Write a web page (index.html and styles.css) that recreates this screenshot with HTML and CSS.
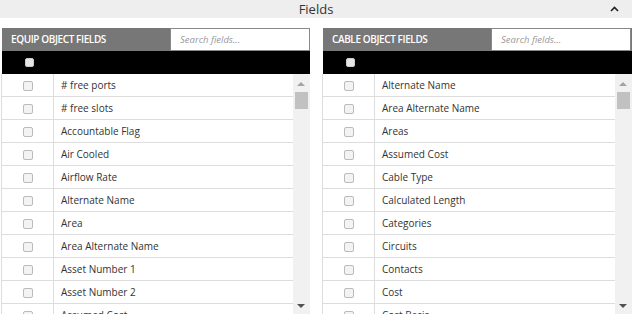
FILE: index.html
```html
<!DOCTYPE html>
<html lang="en">
<head>
    <meta charset="UTF-8">
    <title>Fields</title>
    <link rel="stylesheet" href="styles.css">
</head>
<body>
    <div class="section-header">
        <span class="section-title">Fields</span>
        <svg class="chevron" width="9" height="6" viewBox="0 0 9 6">
            <polyline points="1,5 4.5,1.5 8,5" fill="none" stroke="#222" stroke-width="1.6"/>
        </svg>
    </div>

    <div class="panels">
        <div class="panel panel-left">
            <div class="panel-title">
                <span class="title-text">Equip Object Fields</span>
                <input type="text" class="search" placeholder="Search fields...">
            </div>
            <div class="select-all"><span class="box box-head"></span></div>
            <div class="list">
                <div class="rows">
                    <div class="row"><span class="cell-check"><span class="box"></span></span><span class="cell-name"># free ports</span></div>
                    <div class="row"><span class="cell-check"><span class="box"></span></span><span class="cell-name"># free slots</span></div>
                    <div class="row"><span class="cell-check"><span class="box"></span></span><span class="cell-name">Accountable Flag</span></div>
                    <div class="row"><span class="cell-check"><span class="box"></span></span><span class="cell-name">Air Cooled</span></div>
                    <div class="row"><span class="cell-check"><span class="box"></span></span><span class="cell-name">Airflow Rate</span></div>
                    <div class="row"><span class="cell-check"><span class="box"></span></span><span class="cell-name">Alternate Name</span></div>
                    <div class="row"><span class="cell-check"><span class="box"></span></span><span class="cell-name">Area</span></div>
                    <div class="row"><span class="cell-check"><span class="box"></span></span><span class="cell-name">Area Alternate Name</span></div>
                    <div class="row"><span class="cell-check"><span class="box"></span></span><span class="cell-name">Asset Number 1</span></div>
                    <div class="row"><span class="cell-check"><span class="box"></span></span><span class="cell-name">Asset Number 2</span></div>
                    <div class="row"><span class="cell-check"><span class="box"></span></span><span class="cell-name">Assumed Cost</span></div>
                </div>
                <div class="scrollbar">
                    <span class="arrow-up"></span>
                    <span class="thumb"></span>
                    <span class="arrow-down"></span>
                </div>
            </div>
        </div>

        <div class="panel panel-right">
            <div class="panel-title">
                <span class="title-text">Cable Object Fields</span>
                <input type="text" class="search" placeholder="Search fields...">
            </div>
            <div class="select-all"><span class="box box-head"></span></div>
            <div class="list">
                <div class="rows">
                    <div class="row"><span class="cell-check"><span class="box"></span></span><span class="cell-name">Alternate Name</span></div>
                    <div class="row"><span class="cell-check"><span class="box"></span></span><span class="cell-name">Area Alternate Name</span></div>
                    <div class="row"><span class="cell-check"><span class="box"></span></span><span class="cell-name">Areas</span></div>
                    <div class="row"><span class="cell-check"><span class="box"></span></span><span class="cell-name">Assumed Cost</span></div>
                    <div class="row"><span class="cell-check"><span class="box"></span></span><span class="cell-name">Cable Type</span></div>
                    <div class="row"><span class="cell-check"><span class="box"></span></span><span class="cell-name">Calculated Length</span></div>
                    <div class="row"><span class="cell-check"><span class="box"></span></span><span class="cell-name">Categories</span></div>
                    <div class="row"><span class="cell-check"><span class="box"></span></span><span class="cell-name">Circuits</span></div>
                    <div class="row"><span class="cell-check"><span class="box"></span></span><span class="cell-name">Contacts</span></div>
                    <div class="row"><span class="cell-check"><span class="box"></span></span><span class="cell-name">Cost</span></div>
                    <div class="row"><span class="cell-check"><span class="box"></span></span><span class="cell-name">Cost Basis</span></div>
                </div>
                <div class="scrollbar">
                    <span class="arrow-up"></span>
                    <span class="thumb"></span>
                    <span class="arrow-down"></span>
                </div>
            </div>
        </div>
    </div>
</body>
</html>
```

FILE: styles.css
```css
body {
    margin: 0;
    font-family: "Open Sans", Arial, sans-serif;
    color: #333;
    background: #fff;
    width: 632px;
    overflow: hidden;
}

.section-header {
    height: 18px;
    background-color: #eee;
    display: flex;
    align-items: center;
    justify-content: center;
    position: relative;
}

.section-title {
    font-size: 13px;
    color: #333;
    line-height: 18px;
}

.chevron {
    position: absolute;
    right: 13px;
    top: 6px;
}

.panels {
    display: flex;
    gap: 12px;
    padding-top: 10px;
    padding-left: 1px;
}

.panel {
    display: flex;
    flex-direction: column;
}

.panel-left {
    width: 309px;
}

.panel-right {
    width: 310px;
}

.panel-title {
    display: flex;
    height: 23px;
    margin-left: 1px;
    background-color: #777;
}

.title-text {
    flex: 1;
    color: #fff;
    font-size: 10px;
    font-weight: 600;
    text-transform: uppercase;
    letter-spacing: -0.4px;
    line-height: 23px;
    padding-left: 9px;
}

.search {
    width: 140px;
    box-sizing: border-box;
    height: 23px;
    margin: 0;
    border: 1px solid #888;
    padding: 0 0 0 9px;
    font-family: "Open Sans", Arial, sans-serif;
    font-size: 9.5px;
    outline: none;
}

.search::placeholder {
    color: #999;
    font-style: italic;
}

.panel-right .search {
    margin-right: 1px;
}

.select-all {
    height: 23px;
    margin-left: 1px;
    background-color: #000;
    display: flex;
    align-items: center;
    padding-left: 23px;
}

.box {
    display: inline-block;
    width: 8px;
    height: 8px;
    border: 1px solid #bbb;
    border-radius: 2px;
    background-color: #f3f3f3;
}

.box-head {
    width: 7px;
    height: 7px;
    background-color: #e6e6e6;
    border-color: #ccc;
}

.list {
    display: flex;
    height: 240px;
    border-left: 1px solid #ddd;
}

.rows {
    flex: 1;
    overflow: hidden;
}

.row {
    display: flex;
    height: 22px;
    border-bottom: 1px solid #ddd;
}

.cell-check {
    width: 51px;
    flex: none;
    border-right: 1px solid #ddd;
    display: flex;
    align-items: center;
    justify-content: center;
    padding-top: 1px;
}

.cell-name {
    padding-left: 7px;
    font-size: 10px;
    line-height: 23px;
    color: #333;
    white-space: nowrap;
}

.scrollbar {
    width: 17px;
    flex: none;
    background-color: #f1f1f1;
    position: relative;
}

.arrow-up,
.arrow-down {
    position: absolute;
    left: 4px;
    width: 0;
    height: 0;
    border-left: 4px solid transparent;
    border-right: 4px solid transparent;
}

.arrow-up {
    top: 8px;
    border-bottom: 4px solid #a3a3a3;
}

.arrow-down {
    bottom: 6px;
    border-top: 4px solid #505050;
}

.thumb {
    position: absolute;
    top: 18px;
    left: 2px;
    width: 13px;
    height: 17px;
    background-color: #c1c1c1;
}
```
